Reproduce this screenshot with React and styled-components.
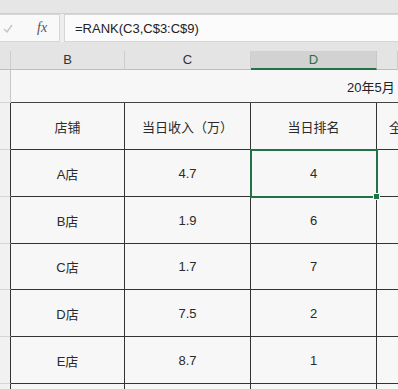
import React from 'react'
import styled, { createGlobalStyle } from 'styled-components'

const Global = createGlobalStyle`
  body {
    margin: 0;
    background: #f7f7f7;
    font-family: "Liberation Sans", "Noto Sans CJK SC", sans-serif;
  }
`

const Page = styled.div`
  width: 398px;
  height: 389px;
  overflow: hidden;
  background: #f7f7f7;
`

const Ribbon = styled.div`
  height: 13px;
  background: #e6e6e6;
  border-bottom: 1px solid #d0d0d0;
`

const FormulaBar = styled.div`
  height: 28px;
  display: flex;
  gap: 4px;
  background: #eeeeee;
`

const NameBox = styled.div`
  width: 60px;
  display: flex;
  align-items: center;
  background: #f9f9f9;
  border: 1px solid #d6d6d6;
  border-left: none;
  box-sizing: border-box;
`

const Check = styled.svg`
  margin-left: 3px;
  width: 10px;
  height: 9px;
`

const Fx = styled.span`
  margin-left: 24px;
  font-family: "Liberation Serif", serif;
  font-style: italic;
  font-size: 14px;
  color: #555;
`

const FormulaInput = styled.div`
  flex: 1;
  display: flex;
  align-items: center;
  padding-left: 10px;
  background: #fbfbfb;
  border: 1px solid #d6d6d6;
  border-right: none;
  font-size: 13px;
  color: #222;
`

const cols = '11px 114px 126px 126px 1fr'

const HeaderBand = styled.div`
  display: grid;
  grid-template-columns: ${cols};
  height: 27px;
  background: #e4e4e4;
  border-bottom: 1px solid #bdbdbd;
`

const ColHead = styled.div`
  margin-top: 9px;
  display: flex;
  align-items: center;
  justify-content: center;
  font-size: 13px;
  color: ${p => (p.$active ? '#2b6e47' : '#333')};
  background: ${p => (p.$active ? '#d2d2d2' : 'transparent')};
  border-right: 1px solid ${p => (p.$active ? '#c8c8c8' : '#cdcdcd')};
  border-bottom: 2px solid ${p => (p.$active ? '#217346' : 'transparent')};
  margin-bottom: -1px;
`

const Row = styled.div`
  display: grid;
  grid-template-columns: ${cols};
  height: ${p => p.$h}px;
`

const RowHead = styled.div`
  background: #f1f1f1;
  border-right: 1px solid ${p => (p.$dark ? '#333' : '#c6c6c6')};
  border-bottom: 1px solid #d4d4d4;
`

const TitleCell = styled.div`
  grid-column: 2 / -1;
  display: flex;
  align-items: center;
  padding-left: 336px;
  font-size: 13px;
  color: #222;
  white-space: nowrap;
  overflow: hidden;
  border-bottom: 1px solid #444;
`

const Cell = styled.div`
  position: relative;
  display: flex;
  align-items: center;
  justify-content: center;
  font-size: 13px;
  color: #2a2a2a;
  white-space: nowrap;
  overflow: ${p => (p.$selected ? 'visible' : 'hidden')};
  border-right: 1px solid #333;
  border-bottom: 1px solid #333;
  ${p =>
    p.$selected &&
    `
    z-index: 2;
    outline: 2px solid #217346;
    outline-offset: -1px;
  `}
  ${p => p.$clip && `justify-content: flex-start; padding-left: 12px; border-right: none;`}
`

const Handle = styled.span`
  position: absolute;
  right: -4px;
  bottom: -4px;
  width: 5px;
  height: 5px;
  background: #217346;
  border: 1px solid #f7f7f7;
`

const header = ['店铺', '当日收入（万）', '当日排名', '全']

const data = [
  ['A店', '4.7', '4'],
  ['B店', '1.9', '6'],
  ['C店', '1.7', '7'],
  ['D店', '7.5', '2'],
  ['E店', '8.7', '1'],
  ['', '', ''],
]

const App = () => {
  return (
    <Page>
      <Global />
      <Ribbon />
      <FormulaBar>
        <NameBox>
          <Check viewBox="0 0 10 9">
            <polyline points="1,5 4,8 9,1" fill="none" stroke="#c4c4c4" strokeWidth="1.4" />
          </Check>
          <Fx>fx</Fx>
        </NameBox>
        <FormulaInput>=RANK(C3,C$3:C$9)</FormulaInput>
      </FormulaBar>
      <HeaderBand>
        <ColHead />
        <ColHead>B</ColHead>
        <ColHead>C</ColHead>
        <ColHead $active>D</ColHead>
        <ColHead />
      </HeaderBand>
      <Row $h={33}>
        <RowHead />
        <TitleCell>20年5月</TitleCell>
      </Row>
      <Row $h={47}>
        <RowHead $dark />
        {header.map((h, i) => (
          <Cell key={h} $clip={i === 3}>{h}</Cell>
        ))}
      </Row>
      {data.map((r, ri) => (
        <Row key={ri} $h={ri % 3 === 2 ? 46 : 47}>
          <RowHead $dark />
          <Cell>{r[0]}</Cell>
          <Cell>{r[1]}</Cell>
          <Cell $selected={ri === 0}>
            {r[2]}
            {ri === 0 && <Handle />}
          </Cell>
          <Cell $clip />
        </Row>
      ))}
    </Page>
  )
}

export default App
